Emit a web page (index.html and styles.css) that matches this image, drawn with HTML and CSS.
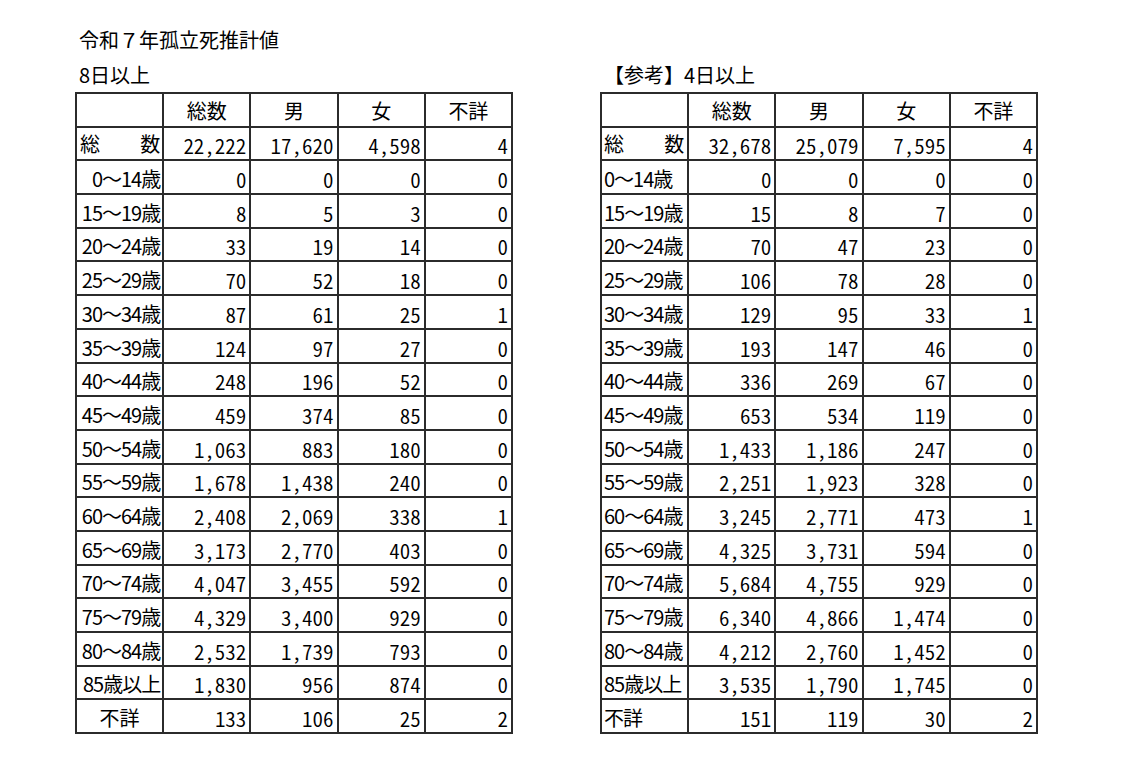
FILE: index.html
```html
<!DOCTYPE html>
<html lang="ja">
<head>
<meta charset="utf-8">
<title>令和７年孤立死推計値</title>
<link rel="stylesheet" href="styles.css">
</head>
<body>
<div class="page">
  <h1 class="title">令和７年孤立死推計値</h1>
  <div class="tables">
    <section class="block">
      <h2 class="caption">8日以上</h2>
      <table class="grid grid-left">
        <thead>
          <tr><th></th><th>総数</th><th>男</th><th>女</th><th>不詳</th></tr>
        </thead>
        <tbody>
          <tr><td class="lbl total"><span>総</span><span>数</span></td><td class="n">22,222</td><td class="n">17,620</td><td class="n">4,598</td><td class="n">4</td></tr>
          <tr><td class="lbl">0～14歳</td><td class="n">0</td><td class="n">0</td><td class="n">0</td><td class="n">0</td></tr>
          <tr><td class="lbl">15～19歳</td><td class="n">8</td><td class="n">5</td><td class="n">3</td><td class="n">0</td></tr>
          <tr><td class="lbl">20～24歳</td><td class="n">33</td><td class="n">19</td><td class="n">14</td><td class="n">0</td></tr>
          <tr><td class="lbl">25～29歳</td><td class="n">70</td><td class="n">52</td><td class="n">18</td><td class="n">0</td></tr>
          <tr><td class="lbl">30～34歳</td><td class="n">87</td><td class="n">61</td><td class="n">25</td><td class="n">1</td></tr>
          <tr><td class="lbl">35～39歳</td><td class="n">124</td><td class="n">97</td><td class="n">27</td><td class="n">0</td></tr>
          <tr><td class="lbl">40～44歳</td><td class="n">248</td><td class="n">196</td><td class="n">52</td><td class="n">0</td></tr>
          <tr><td class="lbl">45～49歳</td><td class="n">459</td><td class="n">374</td><td class="n">85</td><td class="n">0</td></tr>
          <tr><td class="lbl">50～54歳</td><td class="n">1,063</td><td class="n">883</td><td class="n">180</td><td class="n">0</td></tr>
          <tr><td class="lbl">55～59歳</td><td class="n">1,678</td><td class="n">1,438</td><td class="n">240</td><td class="n">0</td></tr>
          <tr><td class="lbl">60～64歳</td><td class="n">2,408</td><td class="n">2,069</td><td class="n">338</td><td class="n">1</td></tr>
          <tr><td class="lbl">65～69歳</td><td class="n">3,173</td><td class="n">2,770</td><td class="n">403</td><td class="n">0</td></tr>
          <tr><td class="lbl">70～74歳</td><td class="n">4,047</td><td class="n">3,455</td><td class="n">592</td><td class="n">0</td></tr>
          <tr><td class="lbl">75～79歳</td><td class="n">4,329</td><td class="n">3,400</td><td class="n">929</td><td class="n">0</td></tr>
          <tr><td class="lbl">80～84歳</td><td class="n">2,532</td><td class="n">1,739</td><td class="n">793</td><td class="n">0</td></tr>
          <tr><td class="lbl">85歳以上</td><td class="n">1,830</td><td class="n">956</td><td class="n">874</td><td class="n">0</td></tr>
          <tr><td class="lbl unk">不詳</td><td class="n">133</td><td class="n">106</td><td class="n">25</td><td class="n">2</td></tr>
        </tbody>
      </table>
    </section>
    <section class="block">
      <h2 class="caption caption-ref">【参考】4日以上</h2>
      <table class="grid grid-right">
        <thead>
          <tr><th></th><th>総数</th><th>男</th><th>女</th><th>不詳</th></tr>
        </thead>
        <tbody>
          <tr><td class="lbl total"><span>総</span><span>数</span></td><td class="n">32,678</td><td class="n">25,079</td><td class="n">7,595</td><td class="n">4</td></tr>
          <tr><td class="lbl">0～14歳</td><td class="n">0</td><td class="n">0</td><td class="n">0</td><td class="n">0</td></tr>
          <tr><td class="lbl">15～19歳</td><td class="n">15</td><td class="n">8</td><td class="n">7</td><td class="n">0</td></tr>
          <tr><td class="lbl">20～24歳</td><td class="n">70</td><td class="n">47</td><td class="n">23</td><td class="n">0</td></tr>
          <tr><td class="lbl">25～29歳</td><td class="n">106</td><td class="n">78</td><td class="n">28</td><td class="n">0</td></tr>
          <tr><td class="lbl">30～34歳</td><td class="n">129</td><td class="n">95</td><td class="n">33</td><td class="n">1</td></tr>
          <tr><td class="lbl">35～39歳</td><td class="n">193</td><td class="n">147</td><td class="n">46</td><td class="n">0</td></tr>
          <tr><td class="lbl">40～44歳</td><td class="n">336</td><td class="n">269</td><td class="n">67</td><td class="n">0</td></tr>
          <tr><td class="lbl">45～49歳</td><td class="n">653</td><td class="n">534</td><td class="n">119</td><td class="n">0</td></tr>
          <tr><td class="lbl">50～54歳</td><td class="n">1,433</td><td class="n">1,186</td><td class="n">247</td><td class="n">0</td></tr>
          <tr><td class="lbl">55～59歳</td><td class="n">2,251</td><td class="n">1,923</td><td class="n">328</td><td class="n">0</td></tr>
          <tr><td class="lbl">60～64歳</td><td class="n">3,245</td><td class="n">2,771</td><td class="n">473</td><td class="n">1</td></tr>
          <tr><td class="lbl">65～69歳</td><td class="n">4,325</td><td class="n">3,731</td><td class="n">594</td><td class="n">0</td></tr>
          <tr><td class="lbl">70～74歳</td><td class="n">5,684</td><td class="n">4,755</td><td class="n">929</td><td class="n">0</td></tr>
          <tr><td class="lbl">75～79歳</td><td class="n">6,340</td><td class="n">4,866</td><td class="n">1,474</td><td class="n">0</td></tr>
          <tr><td class="lbl">80～84歳</td><td class="n">4,212</td><td class="n">2,760</td><td class="n">1,452</td><td class="n">0</td></tr>
          <tr><td class="lbl">85歳以上</td><td class="n">3,535</td><td class="n">1,790</td><td class="n">1,745</td><td class="n">0</td></tr>
          <tr><td class="lbl unk">不詳</td><td class="n">151</td><td class="n">119</td><td class="n">30</td><td class="n">2</td></tr>
        </tbody>
      </table>
    </section>
  </div>
</div>
</body>
</html>
```
FILE: styles.css
```css
html, body {
  margin: 0;
  padding: 0;
  background: #ffffff;
}

body {
  font-family: "Noto Sans CJK JP", "Noto Sans", sans-serif;
  color: #000000;
}

.page {
  padding: 30px 0 0 75px;
}

.title {
  margin: 0 0 15px 0;
  padding-left: 4px;
  font-size: 20px;
  line-height: 20px;
  font-weight: 400;
}

.tables {
  display: flex;
  gap: 87px;
  align-items: flex-start;
}

.block {
  width: 438px;
}

.caption {
  margin: 0 0 7px 0;
  padding-left: 4px;
  font-size: 20px;
  line-height: 20px;
  font-weight: 400;
}

.grid {
  width: 438px;
  table-layout: fixed;
  border-collapse: collapse;
  font-size: 20px;
  line-height: 20px;
}

.grid th,
.grid td {
  border: 2px solid #2b2b2b;
  height: 33.7px;
  box-sizing: border-box;
  padding: 0 3px 5px 3px;
  vertical-align: bottom;
  white-space: nowrap;
  overflow: visible;
  font-weight: 400;
}

.grid th {
  text-align: center;
}

.grid .n {
  text-align: right;
  padding-right: 3px;
  padding-bottom: 4px;
  font-size: 21px;
  font-weight: 350;
  font-feature-settings: "hwid" 1;
}

.grid .lbl {
  letter-spacing: -1px;
  padding-bottom: 4px;
}

.grid-left .lbl {
  text-align: right;
  padding-right: 2px;
}

.grid-left .unk {
  text-align: center;
  letter-spacing: 0;
  padding-right: 3px;
}

.grid-right .lbl {
  text-align: left;
  padding-left: 2px;
}

.grid .total {
  text-align: left;
  letter-spacing: 0;
  padding-bottom: 5px;
}

.grid .total span {
  display: inline-block;
}

.grid .total span + span {
  float: right;
}
```
